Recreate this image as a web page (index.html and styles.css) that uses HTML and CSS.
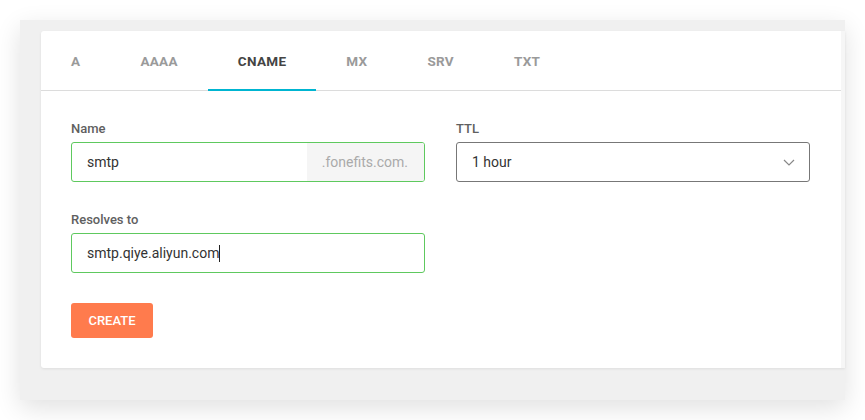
FILE: index.html
```html
<!DOCTYPE html>
<html lang="en">

<head>
    <meta charset="UTF-8">
    <title>DNS record</title>
    <link rel="stylesheet" href="styles.css">
</head>

<body>
    <div class="frame">
        <div class="card">
            <ul class="tabs">
                <li>A</li>
                <li>AAAA</li>
                <li class="active">CNAME</li>
                <li>MX</li>
                <li>SRV</li>
                <li>TXT</li>
            </ul>
            <form class="form">
                <div class="row">
                    <div class="field">
                        <label>Name</label>
                        <div class="input ok">
                            <span class="value">smtp</span>
                            <span class="suffix">.fonefits.com.</span>
                        </div>
                    </div>
                    <div class="field">
                        <label>TTL</label>
                        <div class="input select">
                            <span class="value">1 hour</span>
                            <svg class="chevron" width="12" height="7" viewBox="0 0 12 7">
                                <path d="M1 1l5 5 5-5" fill="none" stroke="#888" stroke-width="1.2" />
                            </svg>
                        </div>
                    </div>
                </div>
                <div class="row">
                    <div class="field">
                        <label>Resolves to</label>
                        <div class="input ok">
                            <span class="value">smtp.qiye.aliyun.com<i class="caret"></i></span>
                        </div>
                    </div>
                </div>
                <div class="actions">
                    <button type="button" class="btn">Create</button>
                </div>
            </form>
        </div>
    </div>
</body>

</html>
```

FILE: styles.css
```css
* {
    padding: 0;
    margin: 0;
    list-style: none;
    box-sizing: border-box;
}

body {
    background: #fff;
    font-family: Roboto, "Liberation Sans", Arial, sans-serif;
}

.frame {
    width: 825px;
    height: 380px;
    margin: 20px;
    padding: 11px 0 0 21px;
    background: #f0f0f0;
    box-shadow: 0 8px 24px rgba(0, 0, 0, .12);
}

.card {
    background: #fff;
    border-right: 4px solid #f6f6f6;
    border-radius: 3px 0 0 3px;
    box-shadow: 0 1px 3px rgba(0, 0, 0, .08);
}

.tabs {
    display: flex;
    height: 60px;
    border-bottom: 1px solid #dcdcdc;
}

.tabs li {
    padding: 0 30px;
    line-height: 60px;
    font-size: 13.5px;
    font-weight: 700;
    letter-spacing: .3px;
    color: #9a9a9a;
    border-bottom: 2px solid transparent;
    margin-bottom: -1px;
}

.tabs li.active {
    color: #444;
    border-bottom-color: #00b5d1;
}

.form {
    padding: 30px 30px 30px;
}

.row {
    display: grid;
    grid-template-columns: 354px 354px;
    gap: 31px;
    margin-bottom: 30px;
}

.field label {
    display: block;
    font-size: 13px;
    font-weight: 500;
    line-height: 16px;
    color: #606060;
    margin-bottom: 5px;
}

.input {
    display: flex;
    align-items: center;
    height: 40px;
    border: 1px solid #888;
    border-radius: 3px;
    overflow: hidden;
    font-size: 14px;
    color: #333;
}

.input.ok {
    border-color: #5ec95e;
}

.input .value {
    flex: 1;
    padding-left: 15px;
}

.input .suffix {
    align-self: stretch;
    display: flex;
    align-items: center;
    padding: 0 16px 0 15px;
    background: #f5f5f5;
    color: #aaa;
}

.select {
    border-color: #777;
}

.chevron {
    margin-right: 14px;
}

.caret {
    display: inline-block;
    width: 1px;
    height: 17px;
    background: #222;
    vertical-align: -4px;
}

.btn {
    width: 82px;
    height: 35px;
    border: none;
    border-radius: 3px;
    background: #ff7b4d;
    color: #fff;
    font-family: Roboto, "Liberation Sans", Arial, sans-serif;
    font-size: 13px;
    font-weight: 500;
    text-transform: uppercase;
}
```
